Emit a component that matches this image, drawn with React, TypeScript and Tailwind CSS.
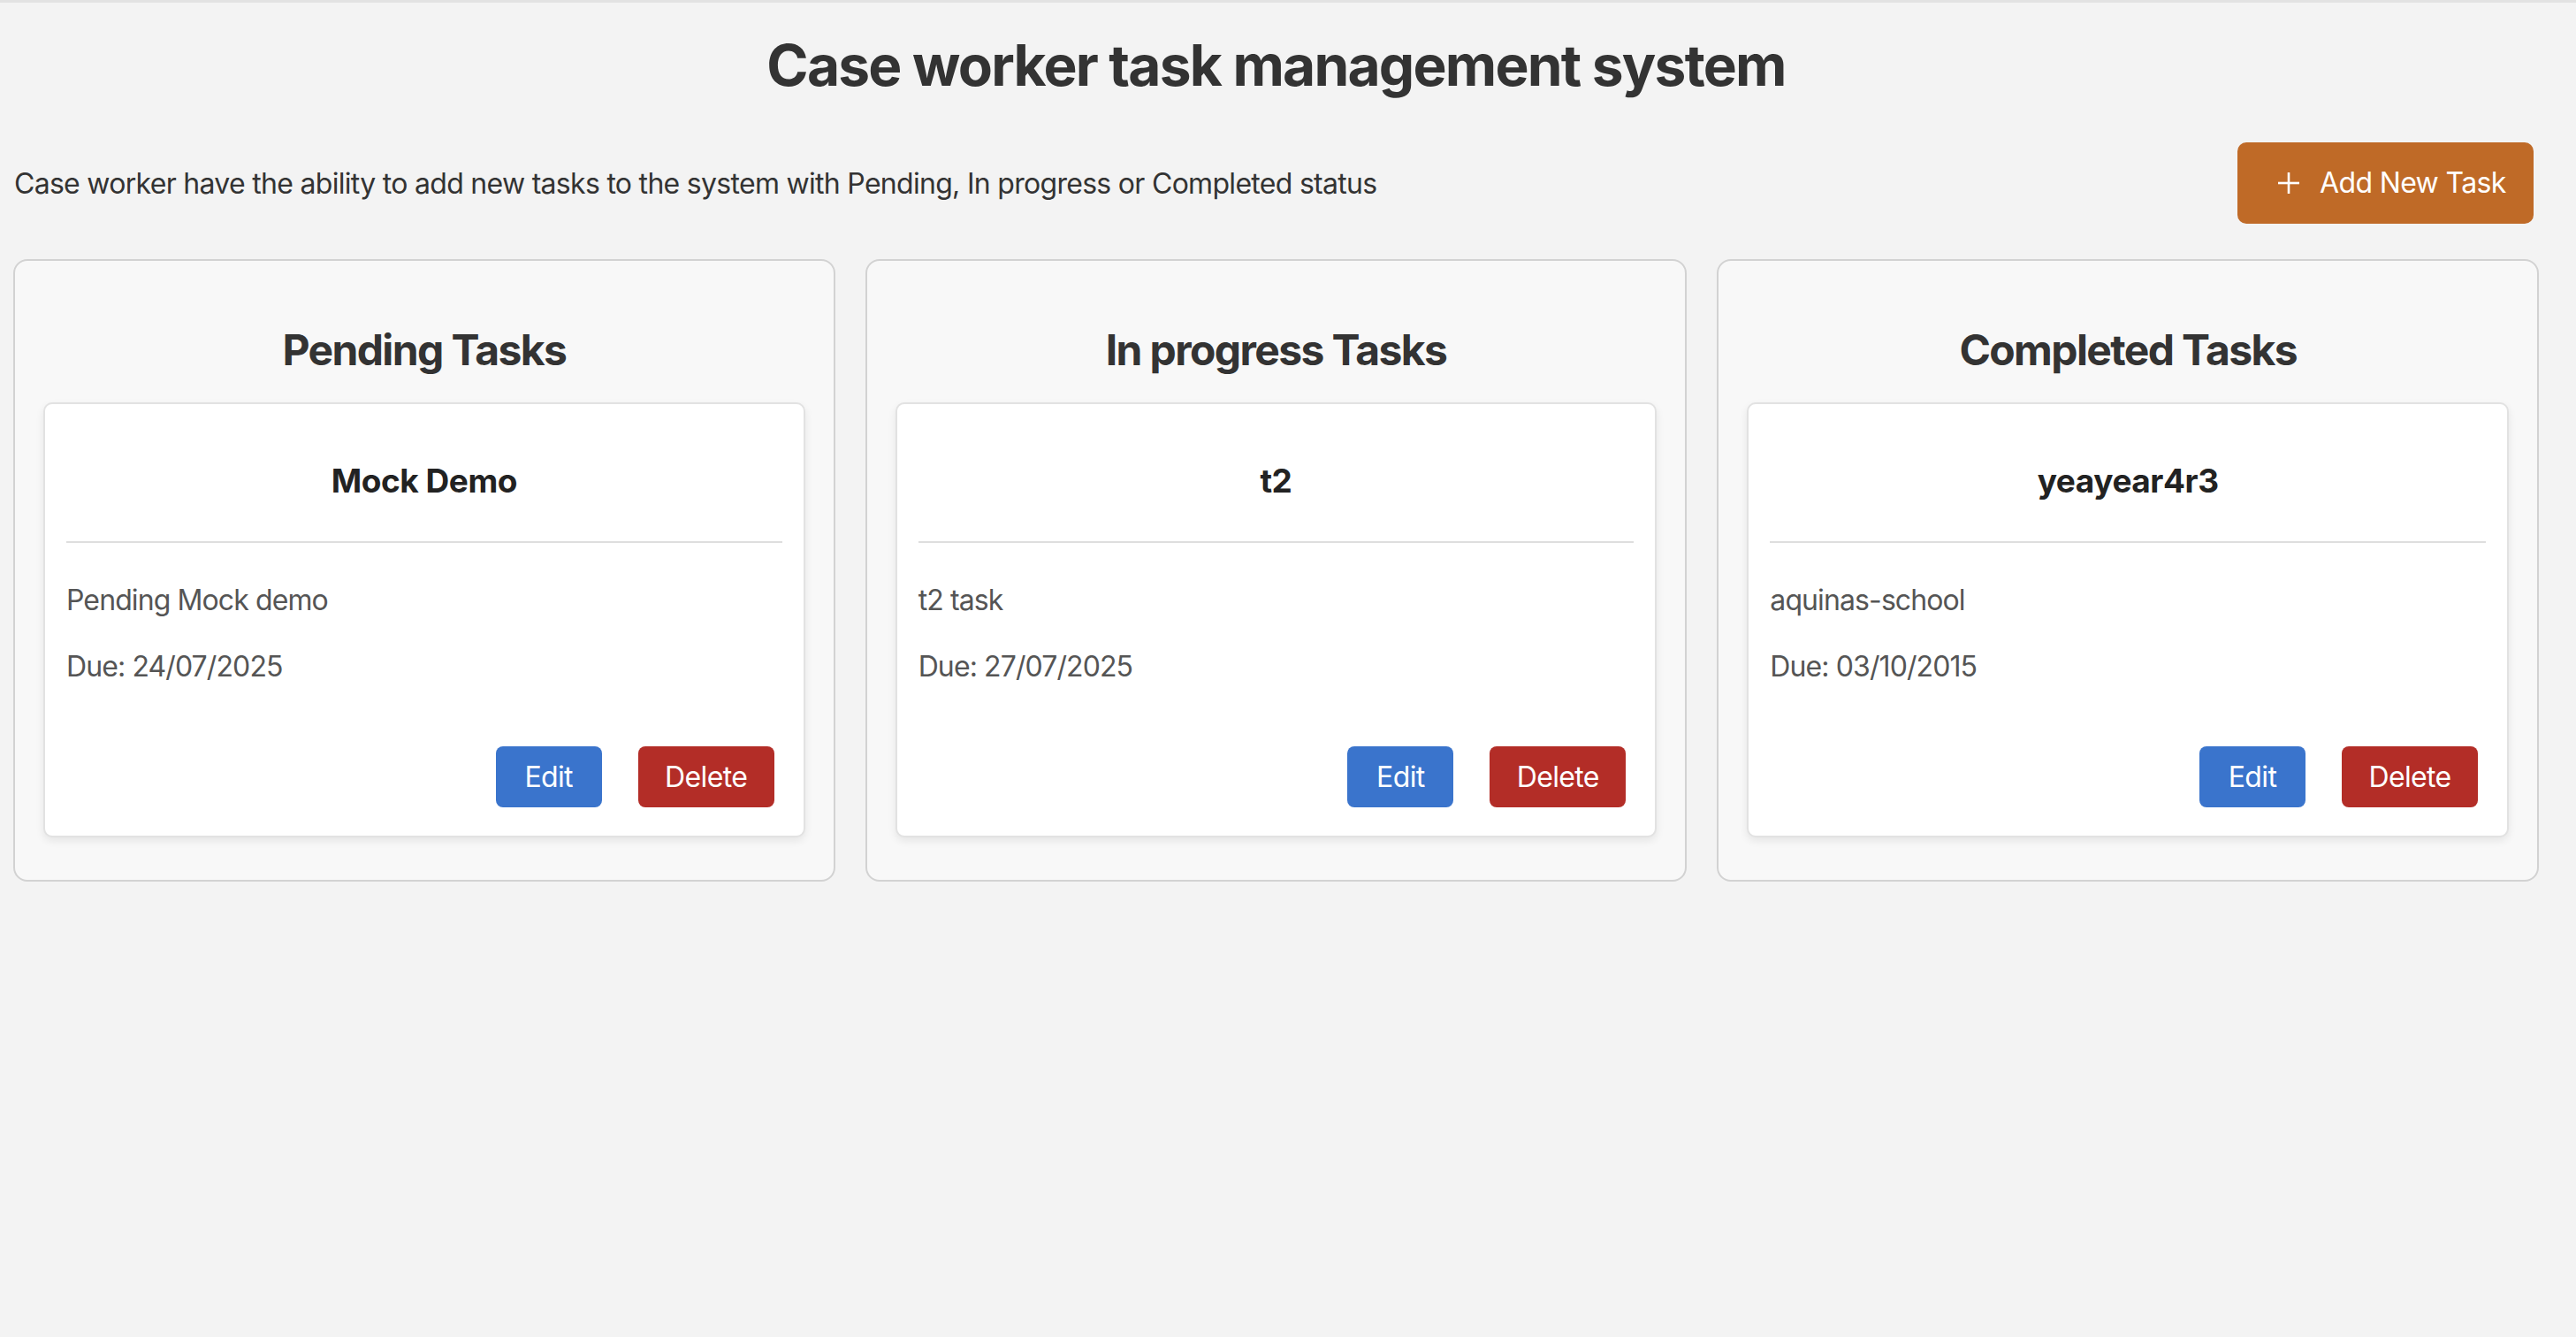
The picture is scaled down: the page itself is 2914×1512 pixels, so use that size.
import React from 'react';

type Task = { id: number; title: string; description: string; due: string };

const columns: { name: string; tasks: Task[] }[] = [
  { name: 'Pending Tasks', tasks: [{ id: 1, title: 'Mock Demo', description: 'Pending Mock demo', due: '24/07/2025' }] },
  { name: 'In progress Tasks', tasks: [{ id: 2, title: 't2', description: 't2 task', due: '27/07/2025' }] },
  { name: 'Completed Tasks', tasks: [{ id: 3, title: 'yeayear4r3', description: 'aquinas-school', due: '03/10/2015' }] },
];

function PlusIcon() {
  return (
    <svg width="26" height="26" viewBox="0 0 26 26" fill="none" stroke="currentColor" strokeWidth="2.6">
      <line x1="13" y1="1" x2="13" y2="25" />
      <line x1="1" y1="13" x2="25" y2="13" />
    </svg>
  );
}

function TaskCard({ task }: { task: Task }) {
  return (
    <div className="bg-white border-2 border-[#e2e2e2] rounded-[10px] shadow-[0_4px_10px_rgba(0,0,0,0.08)] px-[24px] pt-[24px] pb-[32px]">
      {/* header */}
      <div className="border-b-2 border-[#dedede] pt-[40px] pb-[46px]">
        <h3 className="text-center text-[37px] leading-[45px] font-bold tracking-[-0.012em] text-[#222]">{task.title}</h3>
      </div>
      <p className="mt-[45px] text-[32px] leading-[39px] tracking-[-0.028em] text-[#555]">{task.description}</p>
      <p className="mt-[36px] text-[32px] leading-[39px] tracking-[-0.028em] text-[#555]">Due: {task.due}</p>
      <div className="mt-[71px] flex justify-end gap-[41px] pr-[9px]">
        <button className="w-[120px] h-[69px] rounded-[8px] bg-[#3a74cc] text-white text-[32px] tracking-[-0.02em]">Edit</button>
        <button className="w-[154px] h-[69px] rounded-[8px] bg-[#b32d27] text-white text-[32px] tracking-[-0.02em]">Delete</button>
      </div>
    </div>
  );
}

export default function App() {
  return (
    <div className="min-h-[1512px] bg-[#f3f3f3] border-t-[3px] border-[#e2e2e2] font-['Inter','Liberation_Sans',sans-serif] text-[#333]">
      <div className="pl-[15px] pr-[42px]">
        <h1 className="pt-[32px] text-center text-[64px] leading-[77px] font-bold tracking-[-0.028em] text-[#333]">
          Case worker task management system
        </h1>

        <div className="mt-[49px] flex items-center justify-between">
          <p className="pl-[1px] text-[32px] leading-[39px] tracking-[-0.022em] text-[#333]">
            Case worker have the ability to add new tasks to the system with Pending, In progress or Completed status
          </p>
          <button className="mr-[6px] w-[335px] flex items-center gap-[22px] h-[92px] pl-[45px] rounded-[10px] bg-[#bf6a27] text-white text-[32px] tracking-[-0.02em]">
            <PlusIcon />
            <span>Add New Task</span>
          </button>
        </div>

        <div className="mt-[40px] grid grid-cols-3 gap-[34px]">
          {columns.map((col) => (
            <div key={col.name} className="bg-[#f8f8f8] border-2 border-[#d2d2d2] rounded-[16px] px-[32px] pt-[72px] pb-[48px]">
              <h2 className="text-center text-[48px] leading-[58px] font-bold tracking-[-0.034em] text-[#333] mb-[30px]">{col.name}</h2>
              <div className="flex flex-col gap-[24px]">
                {col.tasks.map((t) => (
                  <TaskCard key={t.id} task={t} />
                ))}
              </div>
            </div>
          ))}
        </div>
      </div>
    </div>
  );
}
